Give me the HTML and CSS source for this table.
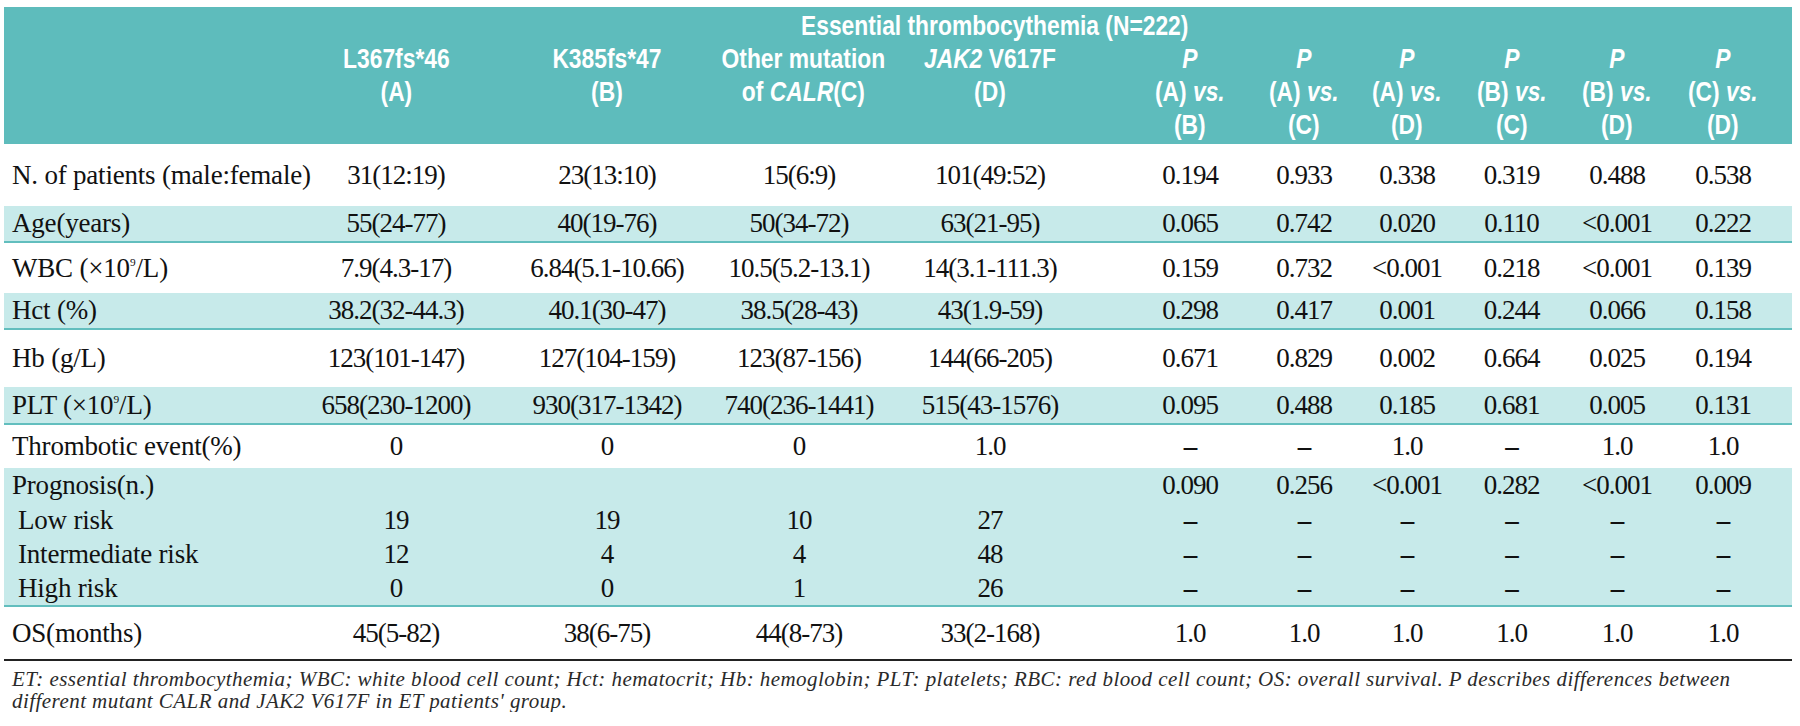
FILE: index.html
```html
<!DOCTYPE html>
<html lang="en">
<head>
<meta charset="utf-8">
<title>Essential thrombocythemia table</title>
<link rel="stylesheet" href="styles.css">
</head>
<body>
<div class="page">
<table class="et">
  <colgroup>
    <col class="c-lab"><col class="c-a"><col class="c-b"><col class="c-c"><col class="c-d">
    <col class="c-p1"><col class="c-p2"><col class="c-p3"><col class="c-p4"><col class="c-p5"><col class="c-p6">
  </colgroup>
  <thead>
    <tr class="title">
      <th></th>
      <th colspan="10" class="title-cell"><span class="hd">Essential thrombocythemia (N=222)</span></th>
    </tr>
    <tr class="cols">
      <th></th>
      <th><span class="hd">L367fs*46<br>(A)</span></th>
      <th><span class="hd">K385fs*47<br>(B)</span></th>
      <th><span class="hd">Other mutation<br>of <i>CALR</i>(C)</span></th>
      <th><span class="hd"><i>JAK2</i> V617F<br>(D)</span></th>
      <th><span class="hd"><i>P</i><br>(A) <i>vs.</i><br>(B)</span></th>
      <th><span class="hd"><i>P</i><br>(A) <i>vs.</i><br>(C)</span></th>
      <th><span class="hd"><i>P</i><br>(A) <i>vs.</i><br>(D)</span></th>
      <th><span class="hd"><i>P</i><br>(B) <i>vs.</i><br>(C)</span></th>
      <th><span class="hd"><i>P</i><br>(B) <i>vs.</i><br>(D)</span></th>
      <th><span class="hd"><i>P</i><br>(C) <i>vs.</i><br>(D)</span></th>
    </tr>
  </thead>
  <tbody>
    <tr class="r-n">
      <td>N. of patients (male:female)</td>
      <td>31(12:19)</td><td>23(13:10)</td><td>15(6:9)</td><td>101(49:52)</td>
      <td>0.194</td><td>0.933</td><td>0.338</td><td>0.319</td><td>0.488</td><td>0.538</td>
    </tr>
    <tr class="shade r-age">
      <td>Age(years)</td>
      <td>55(24-77)</td><td>40(19-76)</td><td>50(34-72)</td><td>63(21-95)</td>
      <td>0.065</td><td>0.742</td><td>0.020</td><td>0.110</td><td>&lt;0.001</td><td>0.222</td>
    </tr>
    <tr class="r-wbc">
      <td>WBC (×10<sup>9</sup>/L)</td>
      <td>7.9(4.3-17)</td><td>6.84(5.1-10.66)</td><td>10.5(5.2-13.1)</td><td>14(3.1-111.3)</td>
      <td>0.159</td><td>0.732</td><td>&lt;0.001</td><td>0.218</td><td>&lt;0.001</td><td>0.139</td>
    </tr>
    <tr class="shade r-hct">
      <td>Hct (%)</td>
      <td>38.2(32-44.3)</td><td>40.1(30-47)</td><td>38.5(28-43)</td><td>43(1.9-59)</td>
      <td>0.298</td><td>0.417</td><td>0.001</td><td>0.244</td><td>0.066</td><td>0.158</td>
    </tr>
    <tr class="r-hb">
      <td>Hb (g/L)</td>
      <td>123(101-147)</td><td>127(104-159)</td><td>123(87-156)</td><td>144(66-205)</td>
      <td>0.671</td><td>0.829</td><td>0.002</td><td>0.664</td><td>0.025</td><td>0.194</td>
    </tr>
    <tr class="shade r-plt">
      <td>PLT (×10<sup>9</sup>/L)</td>
      <td>658(230-1200)</td><td>930(317-1342)</td><td>740(236-1441)</td><td>515(43-1576)</td>
      <td>0.095</td><td>0.488</td><td>0.185</td><td>0.681</td><td>0.005</td><td>0.131</td>
    </tr>
    <tr class="r-thr">
      <td>Thrombotic event(%)</td>
      <td>0</td><td>0</td><td>0</td><td>1.0</td>
      <td class="dash">–</td><td class="dash">–</td><td>1.0</td><td class="dash">–</td><td>1.0</td><td>1.0</td>
    </tr>
    <tr class="shade flat r-prog">
      <td>Prognosis(n.)</td>
      <td></td><td></td><td></td><td></td>
      <td>0.090</td><td>0.256</td><td>&lt;0.001</td><td>0.282</td><td>&lt;0.001</td><td>0.009</td>
    </tr>
    <tr class="shade flat r-low">
      <td class="sub">Low risk</td>
      <td>19</td><td>19</td><td>10</td><td>27</td>
      <td class="dash">–</td><td class="dash">–</td><td class="dash">–</td><td class="dash">–</td><td class="dash">–</td><td class="dash">–</td>
    </tr>
    <tr class="shade flat r-int">
      <td class="sub">Intermediate risk</td>
      <td>12</td><td>4</td><td>4</td><td>48</td>
      <td class="dash">–</td><td class="dash">–</td><td class="dash">–</td><td class="dash">–</td><td class="dash">–</td><td class="dash">–</td>
    </tr>
    <tr class="shade r-high">
      <td class="sub">High risk</td>
      <td>0</td><td>0</td><td>1</td><td>26</td>
      <td class="dash">–</td><td class="dash">–</td><td class="dash">–</td><td class="dash">–</td><td class="dash">–</td><td class="dash">–</td>
    </tr>
    <tr class="r-os">
      <td>OS(months)</td>
      <td>45(5-82)</td><td>38(6-75)</td><td>44(8-73)</td><td>33(2-168)</td>
      <td>1.0</td><td>1.0</td><td>1.0</td><td>1.0</td><td>1.0</td><td>1.0</td>
    </tr>
  </tbody>
</table>
<p class="note">ET: essential thrombocythemia; WBC: white blood cell count; Hct: hematocrit; Hb: hemoglobin; PLT: platelets; RBC: red blood cell count; OS: overall survival. P describes differences between<br>different mutant CALR and JAK2 V617F in ET patients' group.</p>
</div>
</body>
</html>
```

FILE: styles.css
```css
html, body {
  margin: 0;
  padding: 0;
  background: #ffffff;
}

.page {
  padding: 7px 0 0 4px;
}

.et {
  table-layout: fixed;
  width: 1788px;
  border-collapse: separate;
  border-spacing: 0;
  font-family: "Liberation Serif", "Times New Roman", serif;
  font-size: 27px;
  color: #111111;
}

.c-lab { width: 287px; }
.c-a { width: 210px; }
.c-b { width: 202px; }
.c-c { width: 192px; }
.c-d { width: 195px; }
.c-p1 { width: 157px; }
.c-p2 { width: 108px; }
.c-p3 { width: 104px; }
.c-p4 { width: 105px; }
.c-p5 { width: 106px; }
.c-p6 { width: 122px; }

/* header */
.et thead th {
  background: #5ebcbc;
  color: #ffffff;
  font-family: "Liberation Sans", Arial, sans-serif;
  font-weight: bold;
  font-size: 28px;
  line-height: 33px;
  text-align: center;
  vertical-align: top;
  padding: 0;
  white-space: nowrap;
}

.et .hd {
  display: inline-block;
  vertical-align: top;
  transform: scaleX(0.815);
  transform-origin: 50% 50%;
}

.et .title th {
  height: 35px;
  padding-top: 2px;
  box-sizing: border-box;
}

.et .title-cell {
  padding-right: 93px;
}

.et .cols th {
  padding-bottom: 3px;
}

/* body */
.et tbody td {
  padding: 0;
  text-align: center;
  vertical-align: middle;
  line-height: 33px;
  letter-spacing: -1px;
  white-space: nowrap;
}

.et tbody td:first-child {
  text-align: left;
  padding-left: 8px;
  letter-spacing: -0.2px;
}

.et tbody td.sub {
  padding-left: 14px;
}

.et .cols th:nth-child(3), .et tbody td:nth-child(3) { padding-left: 10px; }
.et .cols th:nth-child(5), .et tbody td:nth-child(5) { padding-right: 5px; }
.et .cols th:nth-child(6), .et tbody td:nth-child(6) { padding-left: 43px; }
.et .cols th:nth-child(7), .et tbody td:nth-child(7) { padding-left: 6px; }
.et .cols th:nth-child(11), .et tbody td:nth-child(11) { padding-right: 16px; }

.et sup {
  font-size: 0.42em;
  line-height: 0;
  vertical-align: 0.95em;
  letter-spacing: 0;
}

.et td.dash {
  font-weight: bold;
}

.shade td {
  background: #c7eaea;
  border-bottom: 2px solid #62bebe;
}

.shade.flat td {
  border-bottom: 0;
}

.r-n { height: 62px; }
.r-age { height: 37px; }
.r-wbc { height: 50px; }
.r-wbc td { padding-top: 14px; }
.r-hct { height: 37px; }
.r-hb { height: 57px; }
.r-plt { height: 38px; }
.r-thr { height: 43px; }
.r-prog { height: 35px; }
.r-prog td { padding-top: 1px; }
.r-low { height: 35px; }
.r-int { height: 33px; }
.r-high { height: 36px; }

.r-os { height: 54px; }
.r-os td {
  border-bottom: 2px solid #222222;
}

.note {
  margin: 0;
  padding: 7px 0 0 8px;
  font-family: "Liberation Serif", "Times New Roman", serif;
  font-style: italic;
  font-size: 21px;
  line-height: 22px;
  letter-spacing: 0.45px;
  color: #2a2a2a;
}
```
